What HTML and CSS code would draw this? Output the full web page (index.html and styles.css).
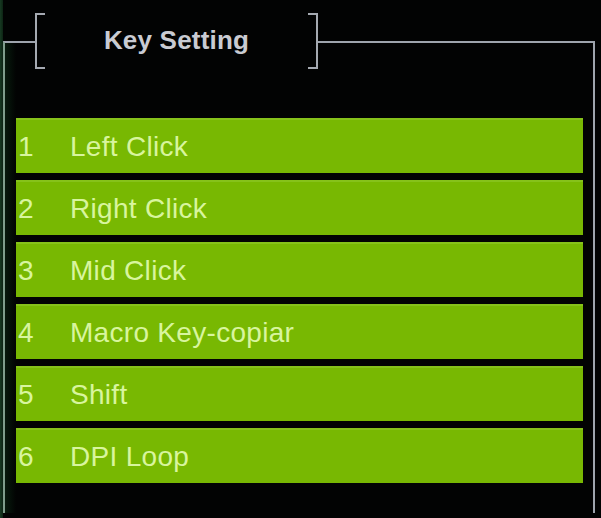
FILE: index.html
```html
<!DOCTYPE html>
<html>
<head>
<meta charset="utf-8">
<link rel="stylesheet" href="styles.css">
</head>
<body>
<div class="panel">
  <div class="legend">
    <span class="bracket bracket-left"></span>
    <span class="title">Key Setting</span>
    <span class="bracket bracket-right"></span>
  </div>
  <ul class="keys">
    <li class="key"><span class="num">1</span><span class="label">Left Click</span></li>
    <li class="key"><span class="num">2</span><span class="label">Right Click</span></li>
    <li class="key"><span class="num">3</span><span class="label">Mid Click</span></li>
    <li class="key"><span class="num">4</span><span class="label">Macro Key-copiar</span></li>
    <li class="key"><span class="num">5</span><span class="label">Shift</span></li>
    <li class="key"><span class="num">6</span><span class="label">DPI Loop</span></li>
  </ul>
</div>
</body>
</html>
```
FILE: styles.css
```css
html, body {
  margin: 0;
  padding: 0;
}
body {
  width: 601px;
  height: 518px;
  background: #020303;
  background-image: linear-gradient(to right, #173a22 0, #0d2414 3px, #020303 3px);
  font-family: "Liberation Sans", Arial, sans-serif;
  overflow: hidden;
}
.panel {
  position: relative;
  box-sizing: border-box;
  margin: 41px 0 0 3px;
  width: 592px;
  height: 472px;
  border: 2px solid #9ea4ad;
  border-left-color: #7f9e8c;
  border-bottom: none;
  padding: 75px 10px 0 11px;
  background: linear-gradient(to right, #071a0c 0, #020303 11px);
}
.legend {
  position: absolute;
  left: 30px;
  top: -30px;
  width: 283px;
  height: 56px;
  display: flex;
  align-items: center;
  justify-content: space-between;
  background: #020303;
}
.bracket {
  box-sizing: border-box;
  width: 10px;
  height: 56px;
  border: 2px solid #a4a9b1;
}
.bracket-left {
  border-right: none;
}
.bracket-right {
  border-left: none;
}
.title {
  color: #c9cbd2;
  font-size: 26px;
  font-weight: bold;
  letter-spacing: 0.2px;
  margin-top: -2px;
}
.keys {
  list-style: none;
  margin: 0;
  padding: 0;
  display: flex;
  flex-direction: column;
  gap: 7px;
}
.key {
  box-sizing: border-box;
  height: 55px;
  display: flex;
  align-items: center;
  background: #78b802;
  border-top: 2px solid #86c21a;
  color: #d8f59e;
  font-size: 28px;
  letter-spacing: 0.3px;
}
.num {
  width: 52px;
  padding-left: 2px;
  box-sizing: content-box;
}
.label {
  white-space: nowrap;
}
```
